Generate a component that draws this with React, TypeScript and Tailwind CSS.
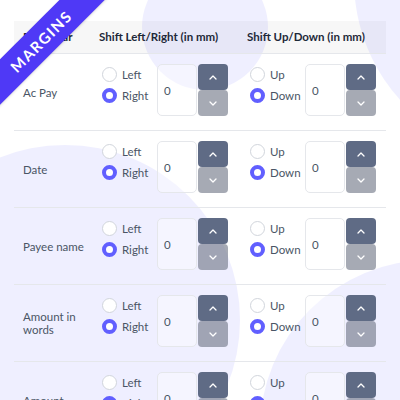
import React from 'react';

interface MarginRow {
  label: string;
  horizontal: 'left' | 'right';
  vertical: 'up' | 'down';
}

const rows: MarginRow[] = [
  { label: 'Ac Pay', horizontal: 'right', vertical: 'down' },
  { label: 'Date', horizontal: 'right', vertical: 'down' },
  { label: 'Payee name', horizontal: 'right', vertical: 'down' },
  { label: 'Amount in words', horizontal: 'right', vertical: 'down' },
  { label: 'Amount', horizontal: 'right', vertical: 'down' },
];

const Radio = ({ checked, label }: { checked: boolean; label: string }) => (
  <div className="flex items-center h-[21px]">
    <span
      className={`w-[15px] h-[15px] rounded-full shrink-0 ${
        checked ? 'border-[4px] border-indigo-500 bg-white' : 'border border-gray-300 bg-white'
      }`}
    />
    <span className="ml-[5px] text-[11.5px] text-gray-600">{label}</span>
  </div>
);

const Chevron = ({ up }: { up?: boolean }) => (
  <svg width="8" height="5" viewBox="0 0 8 5" fill="none">
    <polyline
      points={up ? '1,4 4,1 7,4' : '1,1 4,4 7,1'}
      stroke="white"
      strokeWidth="1.3"
      strokeLinecap="round"
      strokeLinejoin="round"
    />
  </svg>
);

// 입력칸 + 위/아래 버튼
const Stepper = () => (
  <div className="flex">
    <div className="w-[40px] h-[52px] rounded-[5px] border border-gray-200 bg-white/40 pl-[6px] pt-[18px] text-[11.5px] leading-[16px] text-gray-600">
      0
    </div>
    <div className="flex flex-col w-[30px] ml-px">
      <button className="h-[26px] rounded-[4px] bg-[#5f6b85] flex items-center justify-center">
        <Chevron up />
      </button>
      <button className="h-[26px] rounded-[4px] bg-gray-500/60 flex items-center justify-center">
        <Chevron />
      </button>
    </div>
  </div>
);

export default function App() {
  return (
    <div
      className="relative w-full h-screen overflow-hidden bg-white"
      style={{ fontFamily: 'Lato, "Noto Sans", sans-serif' }}
    >
      {/* 배경 원 */}
      <div className="absolute left-[142px] top-[-36px] w-[126px] h-[126px] rounded-full bg-indigo-500/10" />
      <div className="absolute left-[354px] top-[-199px] w-[358px] h-[358px] rounded-full bg-indigo-500/10" />
      <div className="absolute left-[-110px] top-[145px] w-[350px] h-[350px] rounded-full bg-indigo-500/10" />
      <div className="absolute left-[260px] top-[260px] w-[340px] h-[340px] rounded-full bg-indigo-500/10" />

      <div className="relative px-[14px] pt-[21px]">
        {/* 헤더 */}
        <div className="flex h-[33px] items-center bg-black/[0.03] border-b border-gray-200 text-[11.5px] font-bold text-gray-800">
          <div className="w-[78px] pl-[9px]">Particular</div>
          <div className="w-[148px] pl-[7px]">Shift Left/Right (in mm)</div>
          <div className="flex-1 pl-[7px]">Shift Up/Down (in mm)</div>
        </div>

        {rows.map((row) => (
          <div key={row.label} className="flex h-[77px] border-b border-gray-200">
            <div className="w-[78px] pl-[9px] pr-[4px] flex items-center text-[11.5px] leading-[13px] text-gray-600">
              {row.label}
            </div>
            <div className="w-[148px] pl-[10px] pt-[10px] flex items-start">
              <div className="w-[55px]">
                <Radio checked={row.horizontal === 'left'} label="Left" />
                <Radio checked={row.horizontal === 'right'} label="Right" />
              </div>
              <Stepper />
            </div>
            <div className="flex-1 pl-[10px] pt-[10px] flex items-start">
              <div className="w-[55px]">
                <Radio checked={row.vertical === 'up'} label="Up" />
                <Radio checked={row.vertical === 'down'} label="Down" />
              </div>
              <Stepper />
            </div>
          </div>
        ))}
      </div>

      {/* 리본 */}
      <div className="absolute left-[-59px] top-[25px] w-[200px] h-[32px] -rotate-45 bg-indigo-600 flex items-center justify-center shadow-sm">
        <span className="text-white text-[15px] font-bold tracking-[1.5px]">MARGINS</span>
      </div>
    </div>
  );
}
